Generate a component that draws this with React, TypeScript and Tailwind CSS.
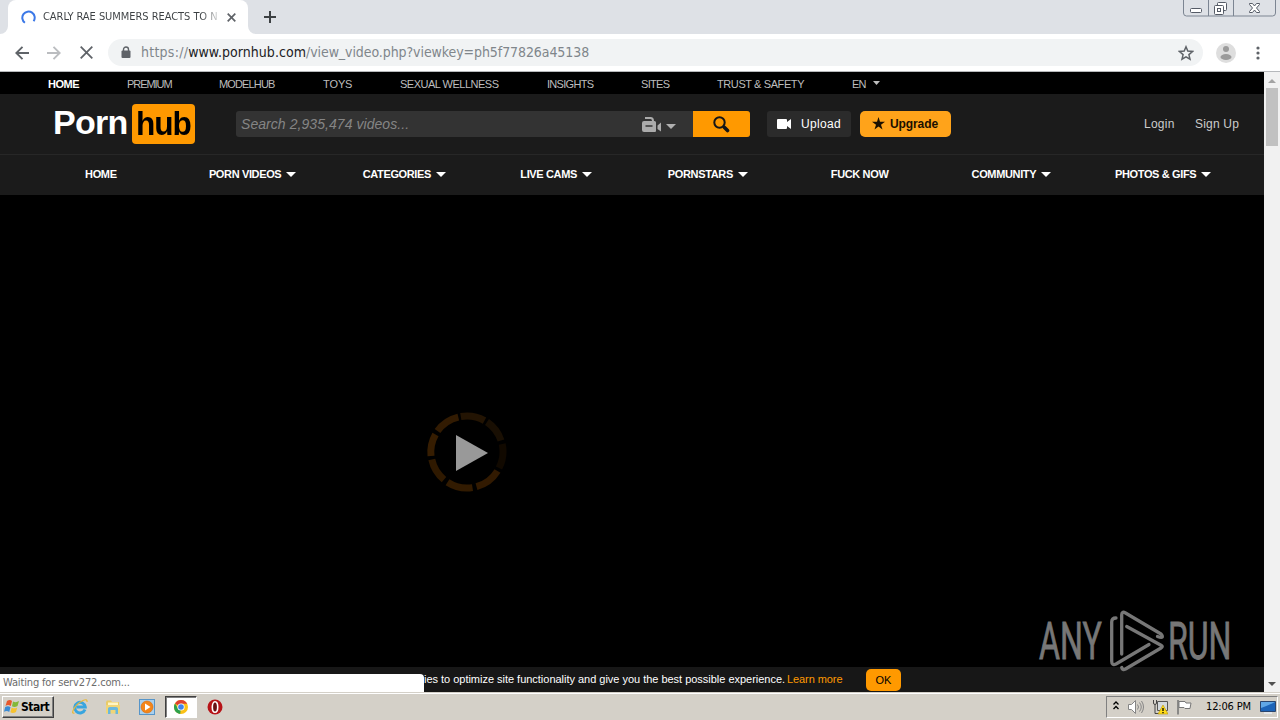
import type { ReactNode } from "react";
import clsx from "clsx";

const topLinks = [
  { label: "HOME", className: "w-[79px] font-bold text-white tracking-[-0.45px]" },
  { label: "PREMIUM", className: "w-[92px] tracking-[-1.05px]" },
  { label: "MODELHUB", className: "w-[104px] tracking-[-0.85px]" },
  { label: "TOYS", className: "w-[77px] tracking-[-0.1px]" },
  { label: "SEXUAL WELLNESS", className: "w-[147px] tracking-[-0.5px]" },
  { label: "INSIGHTS", className: "w-[94px] tracking-[-0.7px]" },
  { label: "SITES", className: "w-[76px] tracking-[-0.7px]" },
  { label: "TRUST & SAFETY", className: "w-[135px] tracking-[-0.4px]" },
];

const navItems = [
  { label: "HOME", menu: false },
  { label: "PORN VIDEOS", menu: true },
  { label: "CATEGORIES", menu: true },
  { label: "LIVE CAMS", menu: true },
  { label: "PORNSTARS", menu: true },
  { label: "FUCK NOW", menu: false },
  { label: "COMMUNITY", menu: true },
  { label: "PHOTOS & GIFS", menu: true },
];

function Caret({ className }: { className?: string }) {
  return (
    <svg viewBox="0 0 10 5" preserveAspectRatio="none" className={clsx("block shrink-0", className)} fill="currentColor">
      <path d="M0 0h10L5 5z" />
    </svg>
  );
}

function TabStrip() {
  return (
    <div className="flex h-[34px] items-start bg-[#dee1e6]">
      <div className="flex h-full items-end">
        <svg className="h-2 w-2" viewBox="0 0 8 8" fill="#fff">
          <path d="M8 0v8H0a8 8 0 0 0 8-8z" />
        </svg>
      </div>
      <div className="flex h-full w-[240px] items-center rounded-t-lg bg-white pl-[13px] font-['DejaVu_Sans_Condensed','DejaVu_Sans',sans-serif]">
        <svg className="h-[15px] w-[15px] shrink-0" viewBox="0 0 15 15" fill="none" stroke="#3b78e7" strokeWidth="2">
          <path d="M3.9 12.8A6.2 6.2 0 1 1 12.6 11.3" />
        </svg>
        <div className="ml-[7px] w-[176px] overflow-hidden whitespace-nowrap bg-[linear-gradient(90deg,#3c4043_90%,transparent_102%)] bg-clip-text text-[11px] tracking-[-0.05px] text-transparent">
          CARLY RAE SUMMERS REACTS TO N
        </div>
        <svg className="ml-2 h-[9px] w-[9px] shrink-0" viewBox="0 0 9 9" stroke="#5f6368" strokeWidth="1.7">
          <path d="M.7.7l7.6 7.6M8.3.7L.7 8.3" />
        </svg>
      </div>
      <div className="flex h-full items-end">
        <svg className="h-2 w-2" viewBox="0 0 8 8" fill="#fff">
          <path d="M0 0v8h8a8 8 0 0 1-8-8z" />
        </svg>
      </div>
      <svg className="ml-2 mt-[11px] h-3 w-3" viewBox="0 0 12 12" stroke="#3c4043" strokeWidth="2">
        <path d="M6 0v12M0 6h12" />
      </svg>
      <svg className="ml-auto mr-1 h-[17px] w-[93px]" viewBox="0 0 93 17" fill="none" stroke="#7c8592">
        <path d="M.5 0v13q0 3 3 3h86q3 0 3-3V0M25.500 0v16M50.500 0v16" />
        <g stroke="#555b66">
          <rect x="7.500" y="8.500" width="11" height="4" rx="1" fill="#fff" />
          <rect x="34.500" y="2.500" width="9" height="8" rx="1" fill="#fff" />
          <rect x="31.500" y="5.500" width="9" height="9" rx="1" fill="#fff" />
          <rect x="34.500" y="8.500" width="3" height="3" />
          <path d="M66.500 3.500h3l2 2.500 2-2.500h3v1L73.500 8l3 3.500v1h-3l-2-2.500-2 2.500h-3v-1l3-3.500-3-3.500z" fill="#fff" />
        </g>
      </svg>
    </div>
  );
}

function Toolbar() {
  return (
    <div className="flex h-[38px] items-center border-b border-[#b6b8bb] bg-white">
      <svg className="ml-[15px] h-[14px] w-[14px]" viewBox="0 0 14 14" fill="none" stroke="#5f6368" strokeWidth="1.900">
        <path d="M14 7H1.500M7.500.8L1.300 7l6.200 6.200" />
      </svg>
      <svg className="ml-[18px] h-[14px] w-[14px]" viewBox="0 0 14 14" fill="none" stroke="#bbbdc0" strokeWidth="1.900">
        <path d="M0 7h12.500M6.500.8L12.700 7l-6.200 6.200" />
      </svg>
      <svg className="ml-[19px] h-[13px] w-[13px]" viewBox="0 0 13 13" stroke="#5f6368" strokeWidth="1.800">
        <path d="M.7.700l11.600 11.600M12.300.7L.7 12.300" />
      </svg>
      <div className="ml-[15px] flex h-[27px] w-[1095px] items-center rounded-full bg-[#f1f3f4] pl-[13px] pr-[9px]">
        <svg className="h-[13px] w-[10px] shrink-0" viewBox="0 0 10 13">
          <path d="M2.500 6V3.500a2.500 2.500 0 0 1 5 0V6" fill="none" stroke="#5f6368" strokeWidth="1.400" />
          <rect x="0.500" y="4.500" width="9" height="7.500" rx="1" fill="#5f6368" />
        </svg>
        <div className="ml-[10px] whitespace-nowrap font-['DejaVu_Sans_Condensed','DejaVu_Sans',sans-serif] text-[14px] text-[#80868b]">
          <span className="tracking-[0.25px]">https://</span>
          <span className="tracking-[0.05px] text-[#202124]">www.pornhub.com</span>
          <span className="tracking-[-0.08px]">/view_video.php?viewkey=ph5f77826a45138</span>
        </div>
        <svg className="ml-auto h-4 w-4 shrink-0" viewBox="0 0 16 16" fill="none" stroke="#5f6368" strokeWidth="1.500">
          <path d="M8 1.800l1.800 4.300 4.700.4-3.600 3.100 1.100 4.600L8 11.800l-4 2.400 1.100-4.600L1.500 6.500l4.700-.4z" />
        </svg>
      </div>
      <svg className="ml-[13px] h-5 w-5" viewBox="0 0 20 20">
        <circle cx="10" cy="10" r="10" fill="#dedede" />
        <circle cx="10" cy="6" r="3" fill="#9b9b9b" />
        <ellipse cx="10" cy="14" rx="5.500" ry="3" fill="#9b9b9b" />
      </svg>
      <svg className="ml-[20px] h-[14px] w-1" viewBox="0 0 4 14" fill="#5f6368">
        <circle cx="2" cy="2" r="1.600" />
        <circle cx="2" cy="7" r="1.600" />
        <circle cx="2" cy="12" r="1.600" />
      </svg>
    </div>
  );
}

function Logo() {
  return (
    <div className="flex h-10 w-[142px] items-center text-[34px] font-bold leading-[40px]">
      <span className="w-[79px] pb-1 tracking-[-0.7px] text-white">
        <span className="inline-block origin-left">Porn</span>
      </span>
      <span className="flex h-10 w-[63px] justify-center rounded-[4px] bg-[#ff9900] tracking-[-1.2px] text-black">
        <span className="-mt-px inline-block scale-x-[0.93]">hub</span>
      </span>
    </div>
  );
}

function Header() {
  return (
    <div className="flex h-[60px] items-center bg-[#1b1b1b] pl-[53px] pr-[25px]">
      <Logo />
      <div className="ml-[41px] flex h-[26px] w-[514px] overflow-hidden rounded-[3px] bg-[#333]">
        <div className="w-[406px] pl-[5px] text-[14px] italic leading-[26px] tracking-[0.06px] text-[#858585]">
          Search 2,935,474 videos...
        </div>
        <svg className="mt-1.5 h-4 w-5" viewBox="0 0 20 16">
          <path d="M3 1h5.500q2.500 0 2.500 3" fill="none" stroke="#ababab" strokeWidth="2" />
          <path d="M2 4h10.500q1.500 0 1.500 1.500V14q0 1-1 1H2q-2 0-2-2V6q0-2 2-2zM15.500 8.500L19 5.500v9L15.500 12z" fill="#ababab" />
          <path d="M3.500 9h7" stroke="#333" strokeWidth="1.500" />
        </svg>
        <Caret className="ml-1 mt-[13px] h-[5px] w-[10px] text-[#b0b0b0]" />
        <div className="ml-auto flex w-[57px] items-center justify-center bg-[#ff9900]">
          <svg className="h-[17px] w-[17px]" viewBox="0 0 17 17" fill="none" stroke="#161616">
            <circle cx="6.500" cy="6.500" r="5.200" strokeWidth="2" />
            <path d="M11.500 11.500l3 3" strokeWidth="3.600" strokeLinecap="round" />
          </svg>
        </div>
      </div>
      <div className="ml-[17px] flex h-[26px] w-[84px] items-center rounded-[3px] bg-[#2b2b2b] pl-[10px]">
        <svg className="h-[10px] w-[15px]" viewBox="0 0 15 10" fill="#fff">
          <path d="M0 1q0-1 1-1h8q1 0 1 1v2l4-3v10l-4-3v2q0 1-1 1H1q-1 0-1-1z" />
        </svg>
        <span className="ml-[9px] text-[12px] tracking-[0.35px] text-white">Upload</span>
      </div>
      <div className="ml-[9px] flex h-[26px] w-[91px] items-center rounded-[5px] bg-[#ffa31a] pl-3">
        <svg className="mb-0.5 h-[13px] w-[13px]" viewBox="0 0 13 13" fill="#1b1000">
          <path d="M6.500 0L8 4.700h5L9 7.700l1.500 4.800-4-3-4 3L4 7.700 0 4.700h5z" />
        </svg>
        <span className="ml-[5px] text-[12px] font-bold tracking-[-0.1px] text-[#1b1000]">Upgrade</span>
      </div>
      <div className="ml-auto flex gap-[20px] whitespace-nowrap text-[12px] text-[#ccc]">
        <span className="w-[31px] tracking-[0.25px]">Login</span>
        <span className="w-[44px] tracking-[0.2px]">Sign Up</span>
      </div>
    </div>
  );
}

function Spinner() {
  return (
    <svg className="ml-[426px] mt-[216px] h-[82px] w-[82px]" viewBox="0 0 82 82" fill="none" strokeWidth="7">
      <path d="M32.300 6.100A36 36 0 0 0 11.500 20" stroke="#321b02" />
      <path d="M9.500 23.400A36 36 0 0 0 5 45" stroke="#361d01" />
      <path d="M5.800 48.500A36 36 0 0 0 18 68.600" stroke="#2f1900" />
      <path d="M21.500 71.300A36 36 0 0 0 46.500 76.600" stroke="#321b01" />
      <path d="M50.500 75.700A36 36 0 0 0 71.500 60" stroke="#321a01" />
      <path d="M34.800 5.500A36 36 0 0 1 58.500 9.600" stroke="#231403" />
      <path d="M61 11A36 36 0 0 1 75 29.500" stroke="#190f03" />
      <path d="M76.200 33A36 36 0 0 1 73 57" stroke="#110900" />
      <path d="M30 24l32 18-32 18z" fill="#999" />
    </svg>
  );
}

function Watermark() {
  return (
    <div className="pointer-events-none absolute left-[1038px] top-[538px]">
      <svg className="h-[64px] w-[198px]" viewBox="0 0 198 64" fill="none" stroke="#777">
        <g strokeWidth="3.300" strokeLinejoin="round" strokeLinecap="round">
          <path d="M78 8Q73.700 8 73.700 12V51Q73.700 56 78 54L111 34.500" />
          <path d="M83.700 44V5Q83.700 .8 87.500 3L123 24Q127 29 119.500 26.500" />
          <path d="M88.700 16.500L123 35.200Q125.500 36.500 123 38L87.500 59Q84.500 60.500 83.700 57.500" />
        </g>
        <g fill="#777" strokeWidth=".8" fontFamily="Roboto, sans-serif" fontSize="51">
          <text transform="translate(1 49) scale(.63 1)">ANY</text>
          <text transform="translate(130 49) scale(.63 1)">RUN</text>
        </g>
      </svg>
    </div>
  );
}

function Page() {
  return (
    <div className="relative flex h-[620px] bg-black font-['Liberation_Sans',Arial,sans-serif]">
      <div className="flex w-[1264px] flex-col">
        <div className="flex h-[22px] items-center whitespace-nowrap bg-black pl-12 pt-0.5 text-[11px] text-[#bdbdbd]">
          {topLinks.map((link) => (
            <span key={link.label} className={link.className}>{link.label}</span>
          ))}
          <span className="tracking-[-0.8px]">EN</span>
          <Caret className="ml-[7px] mb-[3px] h-1 w-[7px]" />
        </div>
        <Header />
        <div className="grid h-[41px] grid-cols-8 border-t border-[#272727] bg-[#1b1b1b] pl-[25px] pr-[25px] text-[11px] font-bold text-white">
          {navItems.map((item) => (
            <div key={item.label} className="flex items-center justify-center gap-[5px] whitespace-nowrap pb-0.5 tracking-[-0.36px]">
              {item.label}
              {item.menu && <Caret className="h-[5px] w-[10px]" />}
            </div>
          ))}
        </div>
        <div className="h-[472px] bg-black">
          <Spinner />
        </div>
        <div className="flex h-[25px] bg-[#171717]">
          <div className="mt-[7px] flex h-[18px] w-[424px] items-center rounded-tr-[4px] bg-white pl-[3px] font-['DejaVu_Sans_Condensed','DejaVu_Sans',sans-serif] text-[11px] tracking-[-0.15px] text-[#6b6b6b]">
            Waiting for serv272.com...
          </div>
          <div className="flex w-[442px] whitespace-nowrap text-[11px] leading-6 text-white">
            <span className="w-[363px] tracking-[-0.02px]">ies to optimize site functionality and give you the best possible experience.</span>
            <span className="tracking-[-0.08px] text-[#ff9900]">Learn more</span>
          </div>
          <div className="mt-0.5 flex h-[22px] w-[35px] items-center justify-center rounded-[5px] bg-[#ff9900] text-[11px] text-black">
            OK
          </div>
        </div>
      </div>
      <div className="flex w-4 flex-col items-center bg-[#f1f1f1] pb-1.5 pt-[7px]">
        <Caret className="h-1 w-2 rotate-180 text-[#a3a3a3]" />
        <div className="mt-[5px] h-[58px] w-3 bg-[#c1c1c1]" />
        <Caret className="mt-auto h-1 w-2 text-[#505050]" />
      </div>
      <Watermark />
    </div>
  );
}

function TaskIcon({ children, className }: { children: ReactNode; className?: string }) {
  return (
    <div className={clsx("flex h-[22px] w-8 items-center justify-center", className)}>
      <svg className="h-4 w-4" viewBox="0 0 16 16">{children}</svg>
    </div>
  );
}

function Taskbar() {
  return (
    <div className="flex h-7 items-center border-t border-[#d4d0c8] bg-[#d4d0c8] pl-0.5 pr-0.5 font-['DejaVu_Sans_Condensed','DejaVu_Sans',sans-serif] shadow-[inset_0_1px_0_#fff]">
      <div className="flex h-[22px] w-[52px] items-center border border-b-[#404040] border-l-white border-r-[#404040] border-t-white pl-px shadow-[inset_-1px_-1px_0_#808080]">
        <svg className="h-[15px] w-4 shrink-0" viewBox="0 0 16 15">
          <path d="M3 2q3-2 5 0L6.800 7Q4 5 1.500 7z" fill="#e8582c" />
          <path d="M9 2.500q3 1.500 6-.5L13.500 7q-3 2-5.500.3z" fill="#83b83a" />
          <path d="M1.200 8q3-1.500 5.300.3L5.200 13Q3 11 0 12.700z" fill="#3b8bd4" />
          <path d="M7.700 8.500q2.500 1.700 5.500 0L12 13q-3 2-5.600.3z" fill="#f7c22f" />
        </svg>
        <span className="ml-px text-[12px] font-bold tracking-[-0.5px] text-black">Start</span>
      </div>
      <div className="ml-[10px] flex items-center">
        <TaskIcon>
          <path d="M13 10.500A5.300 5.300 0 1 1 13.300 8H4.500" fill="none" stroke="#38a5df" strokeWidth="2.900" />
          <path d="M2.500 14Q-.5 15 1.300 11 4 5 11 1.500q4.500-2 4 1.500" fill="none" stroke="#e8b93b" strokeWidth="1.200" />
        </TaskIcon>
        <TaskIcon className="ml-px">
          <path d="M1 3l1-1.500h4L7 3h7v10H1z" fill="#e9cb68" />
          <path d="M3 3.500h10V8H3z" fill="#fff5c2" />
          <path d="M1 6h14v8.500H1z" fill="#f0d577" />
          <path d="M3 15V9.500q0-1.500 2-1.500h6q2 0 2 1.500V15h-2.500v-4h-5v4z" fill="#69b8dd" />
        </TaskIcon>
        <TaskIcon className="ml-0.5">
          <rect x=".5" y=".5" width="15" height="15" fill="#a9d0ee" stroke="#5695c9" />
          <circle cx="8" cy="8" r="6" fill="#f48519" stroke="#d86a08" strokeWidth=".6" />
          <path d="M6 4.500L11.500 8 6 11.500z" fill="#fff" />
        </TaskIcon>
        <TaskIcon className="ml-0.5 border border-b-white border-l-[#404040] border-r-white border-t-[#404040] bg-white shadow-[inset_1px_1px_0_#808080]">
          <circle cx="8" cy="8" r="7" fill="#fbc116" />
          <path d="M8 8L2 4.400A7 7 0 0 1 14.200 4.800H8z" fill="#df4130" />
          <path d="M8 8l-.8 7A7 7 0 0 1 2 4.400l3 5z" fill="#2da14c" />
          <circle cx="8" cy="8" r="3.600" fill="#fff" />
          <circle cx="8" cy="8" r="2.800" fill="#3f83ec" />
        </TaskIcon>
        <TaskIcon className="ml-0.5">
          <circle cx="8" cy="8" r="7.500" fill="#b71318" />
          <ellipse cx="8" cy="8" rx="2.700" ry="5.300" fill="#681014" stroke="#fff" strokeWidth="1.600" />
        </TaskIcon>
      </div>
      <div className="ml-auto mt-px flex h-[22px] w-[172px] items-center border border-b-white border-l-[#808080] border-r-white border-t-[#808080] pl-[6px]">
        <svg className="mb-1 h-[9px] w-[6px]" viewBox="0 0 6 9" fill="none" stroke="#000" strokeWidth="1.300">
          <path d="M.5 3.500L3 1l2.500 2.500M.5 8L3 5.500 5.500 8" />
        </svg>
        <svg className="ml-[9px] h-4 w-4" viewBox="0 0 16 16" fill="none" stroke="#858585">
          <path d="M.5 5.500h3l4-4v13l-4-4h-3z" fill="#fff" />
          <path d="M9.500 5.500q2 2.500 0 5M11.500 3.500q3.500 4.500 0 9M13.500 2q4 6 0 12" />
        </svg>
        <svg className="ml-2 h-4 w-4" viewBox="0 0 16 16">
          <path d="M5.500 2.500h10v9h-10z" fill="#d4d9dd" stroke="#555" />
          <path d="M1.500 1v3q0 1.500 1.500 1.500T4.500 4V1M3 5.500v9h5" fill="none" stroke="#444" />
          <path d="M11 6l5 9H6z" fill="#ffdc18" stroke="#b89500" strokeWidth=".6" />
          <path d="M11 9v3M11 13v1.200" stroke="#000" strokeWidth="1.300" />
        </svg>
        <svg className="ml-2 h-4 w-4" viewBox="0 0 16 16" fill="#fff" stroke="#777">
          <path d="M2 1v14.500" strokeWidth="1.600" />
          <path d="M3 2.500h6l1 1.500h5L14 9.500H9L8 8.500H3z" />
        </svg>
        <span className="ml-[14px] w-[46px] whitespace-nowrap text-[11px] tracking-[-0.15px] text-black">12:06 PM</span>
        <svg className="ml-[8px] h-[13px] w-4 shrink-0" viewBox="0 0 16 13">
          <path d="M.5.500h15v10H.5z" fill="#1d64b8" stroke="#2b456d" />
          <path d="M1 1h14Q9 4 1 7z" fill="#60a7e6" />
          <path d="M4 12h8" stroke="#e8eef5" strokeWidth="1.500" />
        </svg>
      </div>
    </div>
  );
}

export default function App() {
  return (
    <div className="h-[720px] w-[1280px] overflow-hidden bg-black">
      <TabStrip />
      <Toolbar />
      <Page />
      <Taskbar />
    </div>
  );
}
